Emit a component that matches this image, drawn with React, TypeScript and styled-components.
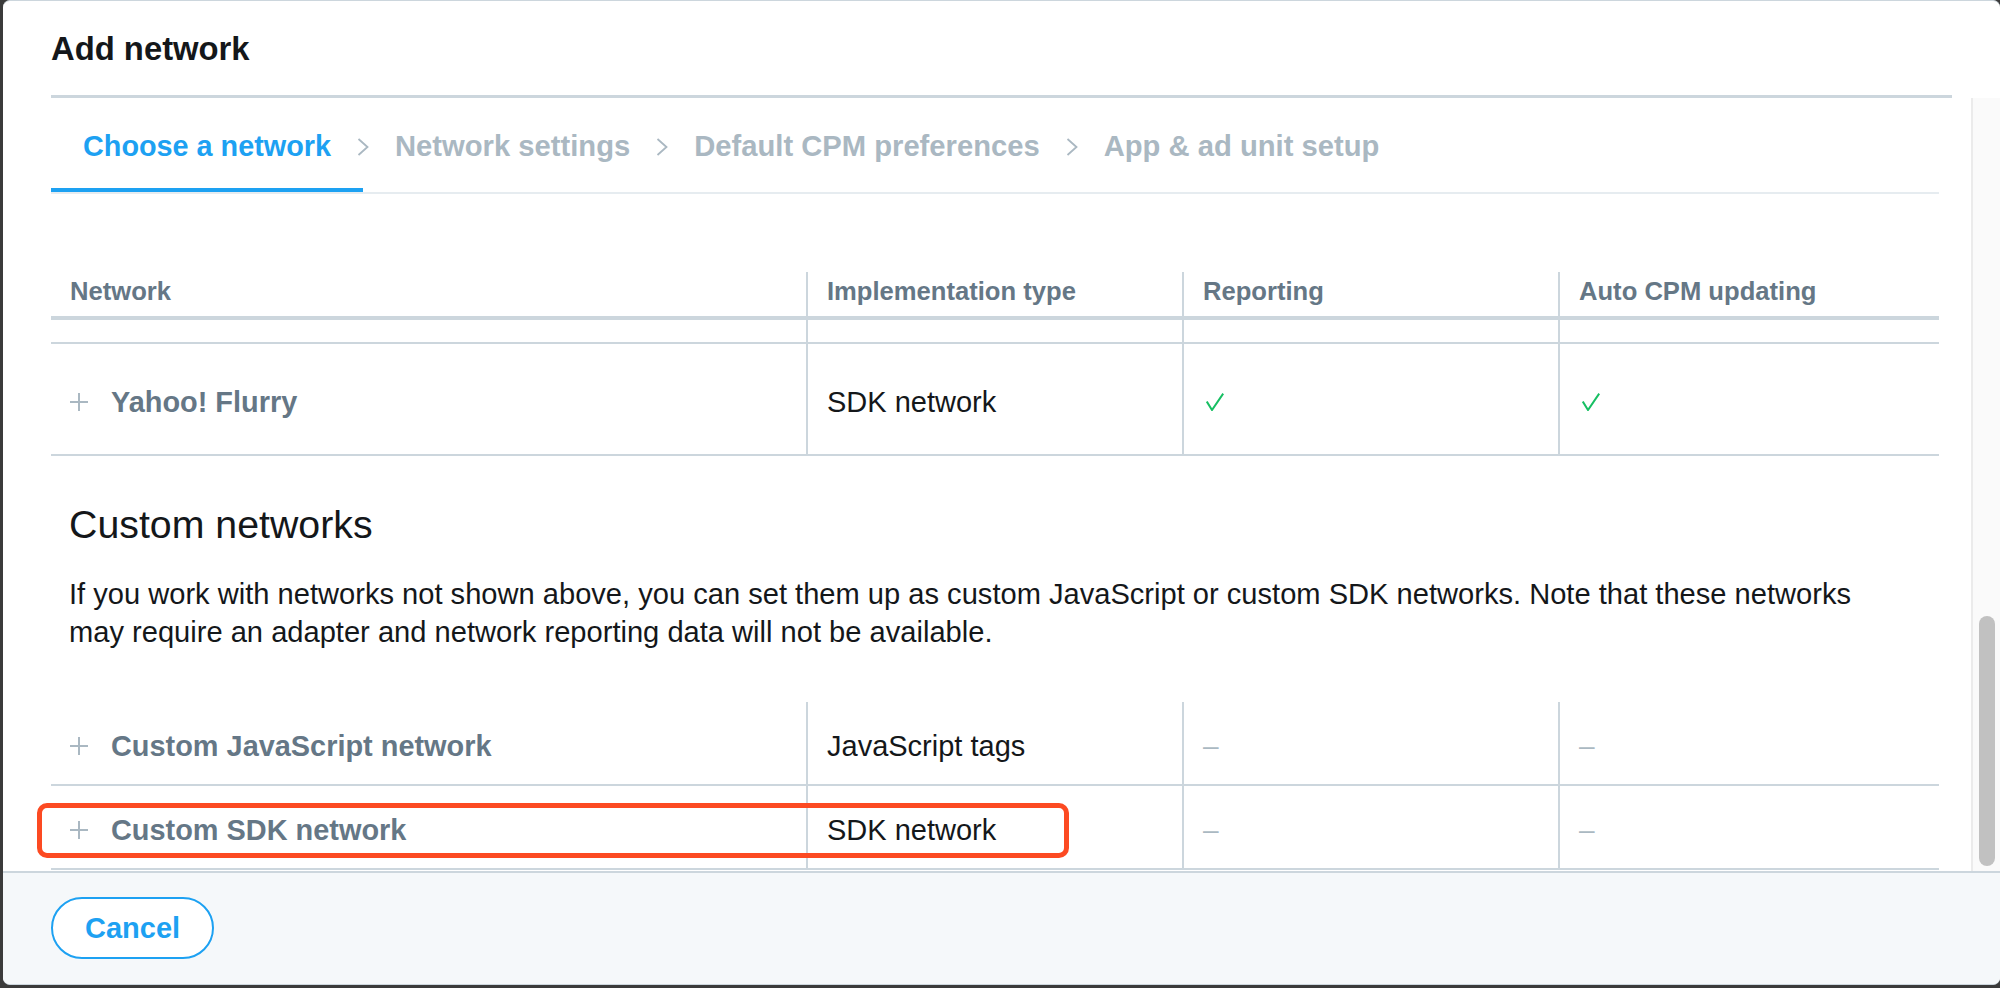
import React from 'react';
import styled, { createGlobalStyle } from 'styled-components';

const GlobalStyle = createGlobalStyle`
  html, body {
    margin: 0;
    padding: 0;
    background: #3b3b3b;
  }
  body {
    font-family: "Liberation Sans", Arial, Helvetica, sans-serif;
  }
  * {
    box-sizing: border-box;
  }
`;

const Page = styled.div`
  height: 988px;
  padding: 0 0 3px 3px;
  display: flex;
`;

const Modal = styled.div`
  flex: 1;
  display: flex;
  flex-direction: column;
  background: #fff;
  border-top: 1px solid #ccd6dd;
  border-bottom: 1px solid #ccd6dd;
  border-radius: 7px;
  overflow: hidden;
`;

const Header = styled.header`
  flex: none;
  padding: 30px 48px 0 48px;
`;

const HeaderInner = styled.div`
  padding-bottom: 28px;
  border-bottom: 3px solid #ccd6dd;
`;

const Title = styled.h1`
  margin: 0;
  font-size: 32.8px;
  line-height: 36px;
  font-weight: 700;
  color: #14171a;
`;

const Body = styled.div`
  flex: 1;
  min-height: 0;
  display: flex;
  overflow: hidden;
`;

const Content = styled.div`
  flex: 1;
  min-width: 0;
  padding: 0 32px 0 48px;
  overflow: hidden;
`;

const ScrollTrack = styled.div`
  flex: none;
  width: 29px;
  border-left: 2px solid #ebebeb;
  background: #fafafa;
  display: flex;
  flex-direction: column;
  justify-content: flex-end;
  padding: 0 5px 5px 6px;
`;

const ScrollThumb = styled.div`
  height: 250px;
  border-radius: 8px;
  background: #c1c1c1;
`;

const TabBar = styled.nav`
  display: flex;
  border-bottom: 2px solid #e6ecf0;
`;

const Tab = styled.div<{ $active?: boolean }>`
  position: relative;
  height: 94px;
  padding: 6px 32px 0;
  display: flex;
  align-items: center;
  font-size: ${p => (p.$active ? '28.8px' : '29.2px')};
  font-weight: 700;
  white-space: nowrap;
  color: ${p => (p.$active ? '#1da1f2' : '#aab8c2')};
  border-bottom: 4px solid ${p => (p.$active ? '#1da1f2' : 'transparent')};
`;

const Chevron = styled.svg`
  position: absolute;
  right: -6px;
  top: 40px;
  width: 12px;
  height: 18px;
`;

const Table = styled.div<{ $top: number }>`
  margin-top: ${p => p.$top}px;
`;

const Row = styled.div<{ $height: number; $line: number }>`
  position: relative;
  display: grid;
  grid-template-columns: 755px 376px 376px 1fr;
  height: ${p => p.$height}px;
  border-bottom: ${p => p.$line}px solid #ccd6dd;
`;

const Cell = styled.div<{ $first?: boolean; $head?: boolean }>`
  display: flex;
  align-items: center;
  gap: 23px;
  padding: ${p => (p.$head ? '0 19px 5px' : '6px 19px 0')};
  border-left: ${p => (p.$first ? 'none' : '2px solid #ccd6dd')};
`;

const HeadLabel = styled.span`
  font-size: 25.6px;
  font-weight: 700;
  color: #657786;
  white-space: nowrap;
`;

const NetworkName = styled.span`
  font-size: 28.9px;
  font-weight: 700;
  color: #657786;
  white-space: nowrap;
`;

const CellText = styled.span`
  font-size: 29px;
  color: #14171a;
  white-space: nowrap;
`;

const Dash = styled.span`
  font-size: 28px;
  color: #aab8c2;
`;

const CheckMark = styled.svg`
  margin-left: 3px;
`;

const SectionTitle = styled.h2`
  margin: 45px 0 0;
  padding-left: 18px;
  font-size: 39.3px;
  line-height: 46px;
  font-weight: 400;
  color: #14171a;
`;

const Description = styled.p`
  margin: 28px 0 0;
  padding-left: 18px;
  max-width: 1830px;
  font-size: 29.1px;
  line-height: 38px;
  color: #14171a;
`;

const Highlight = styled.div`
  position: absolute;
  top: 17px;
  left: -14px;
  width: 1032px;
  height: 55px;
  border: 5px solid #fc4a22;
  border-radius: 10px;
  pointer-events: none;
`;

const Footer = styled.footer`
  flex: none;
  border-top: 2px solid #ccd6dd;
  background: #f5f8fa;
  padding: 24px 48px 25px;
`;

const CancelButton = styled.button`
  height: 62px;
  padding: 0 32px;
  border: 2px solid #1da1f2;
  border-radius: 31px;
  background: #fff;
  color: #1da1f2;
  font-family: "Liberation Sans", Arial, sans-serif;
  font-size: 29px;
  font-weight: 700;
  cursor: pointer;
`;

const PlusIcon = () => (
  <svg width="18" height="18" viewBox="0 0 18 18" style={{ flex: 'none' }}>
    <path d="M9 0V18M0 9H18" stroke="#aab8c2" strokeWidth="2" fill="none" />
  </svg>
);

const CheckIcon = () => (
  <CheckMark width="18" height="18" viewBox="0 0 18 18">
    <path d="M0.8 8.6L6 17L17.2 0.6" stroke="#17bf63" strokeWidth="2" fill="none" />
  </CheckMark>
);

const steps = ['Choose a network', 'Network settings', 'Default CPM preferences', 'App & ad unit setup'];
const columns = ['Network', 'Implementation type', 'Reporting', 'Auto CPM updating'];

type NetworkRow = {
  name: string;
  type: string;
  reporting: boolean;
  autoCpm: boolean;
  highlight?: boolean;
};

const customNetworks: NetworkRow[] = [
  { name: 'Custom JavaScript network', type: 'JavaScript tags', reporting: false, autoCpm: false },
  { name: 'Custom SDK network', type: 'SDK network', reporting: false, autoCpm: false, highlight: true },
];

function NetworkLine({ row, height }: { row: NetworkRow; height: number }) {
  return (
    <Row $height={height} $line={2}>
      <Cell $first>
        <PlusIcon />
        <NetworkName>{row.name}</NetworkName>
      </Cell>
      <Cell>
        <CellText>{row.type}</CellText>
      </Cell>
      <Cell>{row.reporting ? <CheckIcon /> : <Dash>–</Dash>}</Cell>
      <Cell>{row.autoCpm ? <CheckIcon /> : <Dash>–</Dash>}</Cell>
      {row.highlight && <Highlight />}
    </Row>
  );
}

function App() {
  return (
    <>
      <GlobalStyle />
      <Page>
        <Modal>
          <Header>
            <HeaderInner>
              <Title>Add network</Title>
            </HeaderInner>
          </Header>
          <Body>
            <Content>
              <TabBar>
                {steps.map((step, i) => (
                  <Tab key={step} $active={i === 0}>
                    {step}
                    {i < steps.length - 1 && (
                      <Chevron viewBox="0 0 12 18">
                        <path d="M1.5 1L10.5 9L1.5 17" stroke="#aab8c2" strokeWidth="1.8" fill="none" />
                      </Chevron>
                    )}
                  </Tab>
                ))}
              </TabBar>

              <Table $top={78}>
                <Row $height={48} $line={4}>
                  {columns.map((col, i) => (
                    <Cell key={col} $first={i === 0} $head>
                      <HeadLabel>{col}</HeadLabel>
                    </Cell>
                  ))}
                </Row>
                <Row $height={24} $line={2}>
                  <Cell $first />
                  <Cell />
                  <Cell />
                  <Cell />
                </Row>
                <NetworkLine
                  row={{ name: 'Yahoo! Flurry', type: 'SDK network', reporting: true, autoCpm: true }}
                  height={112}
                />
              </Table>

              <SectionTitle>Custom networks</SectionTitle>
              <Description>
                If you work with networks not shown above, you can set them up as custom JavaScript or custom SDK
                networks. Note that these networks may require an adapter and network reporting data will not be
                available.
              </Description>

              <Table $top={51}>
                {customNetworks.map(row => (
                  <NetworkLine key={row.name} row={row} height={84} />
                ))}
              </Table>
            </Content>
            <ScrollTrack>
              <ScrollThumb />
            </ScrollTrack>
          </Body>
          <Footer>
            <CancelButton>Cancel</CancelButton>
          </Footer>
        </Modal>
      </Page>
    </>
  );
}

export default App;
